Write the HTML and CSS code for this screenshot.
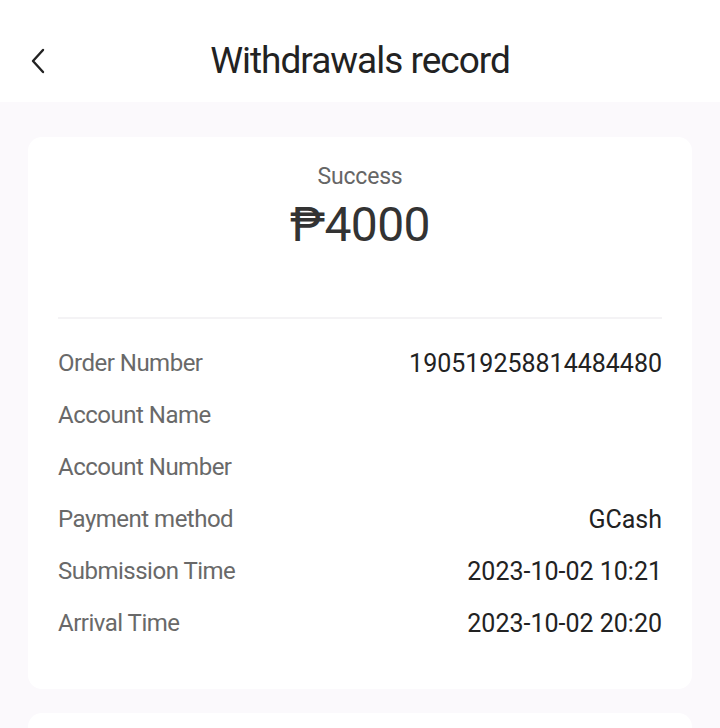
FILE: index.html
```html
<!DOCTYPE html>
<html>
  <head>
    <meta charset="utf-8" />
    <title>Withdrawals record</title>
    <meta name="viewport" content="width=device-width, initial-scale=1" />
    <link rel="stylesheet" href="styles.css">
  </head>
  <body>
    <div class="top-bar">
      <button class="back-button" aria-label="Back">
        <svg width="18" height="28" viewBox="0 0 18 28">
          <path d="M14 3 L4 14 L14 25" fill="none" stroke="#222" stroke-width="2.4" stroke-linecap="round" stroke-linejoin="round"/>
        </svg>
      </button>
      <div class="title">Withdrawals record</div>
    </div>

    <div class="content">
      <div class="card">
        <div class="status">Success</div>
        <div class="amount">₱4000</div>
        <hr class="divider">

        <div class="detail-rows">
          <div class="detail-row">
            <div class="label">Order Number</div>
            <div class="value">190519258814484480</div>
          </div>
          <div class="detail-row">
            <div class="label">Account Name</div>
            <div class="value"></div>
          </div>
          <div class="detail-row">
            <div class="label">Account Number</div>
            <div class="value"></div>
          </div>
          <div class="detail-row">
            <div class="label">Payment method</div>
            <div class="value">GCash</div>
          </div>
          <div class="detail-row">
            <div class="label">Submission Time</div>
            <div class="value">2023-10-02 10:21</div>
          </div>
          <div class="detail-row">
            <div class="label">Arrival Time</div>
            <div class="value">2023-10-02 20:20</div>
          </div>
        </div>
      </div>

      <div class="card next-card"></div>
    </div>
  </body>
</html>
```

FILE: styles.css
```css
body {
  margin: 0;
  font-family: Roboto, "Noto Sans", sans-serif;
  background-color: #fbf9fc;
  color: #222;
}

.top-bar {
  height: 102px;
  background-color: #fff;
  display: flex;
  align-items: center;
  justify-content: center;
  position: relative;
}

.back-button {
  position: absolute;
  left: 29px;
  top: 47px;
  border: none;
  background: none;
  padding: 0;
}

.title {
  font-size: 37px;
  color: #222;
  letter-spacing: -1px;
  margin-top: 18px;
}

.content {
  padding: 35px 28px 0;
}

.card {
  background-color: #fff;
  border-radius: 14px;
  padding: 26px 30px 40px;
}

.status {
  text-align: center;
  font-size: 23px;
  letter-spacing: -0.2px;
  color: #666;
}

.amount {
  text-align: center;
  font-size: 48px;
  letter-spacing: -0.6px;
  color: #333;
  margin-top: 6px;
}

.divider {
  border: none;
  border-top: 2px solid #f4f3f5;
  margin: 64px 0 18px;
}

.detail-row {
  display: flex;
  justify-content: space-between;
  align-items: center;
  height: 52px;
}

.label {
  color: #696969;
  font-size: 24px;
  letter-spacing: -0.5px;
}

.value {
  color: #222;
  font-size: 25px;
}

.next-card {
  margin-top: 24px;
  height: 40px;
  padding: 0;
}
```
